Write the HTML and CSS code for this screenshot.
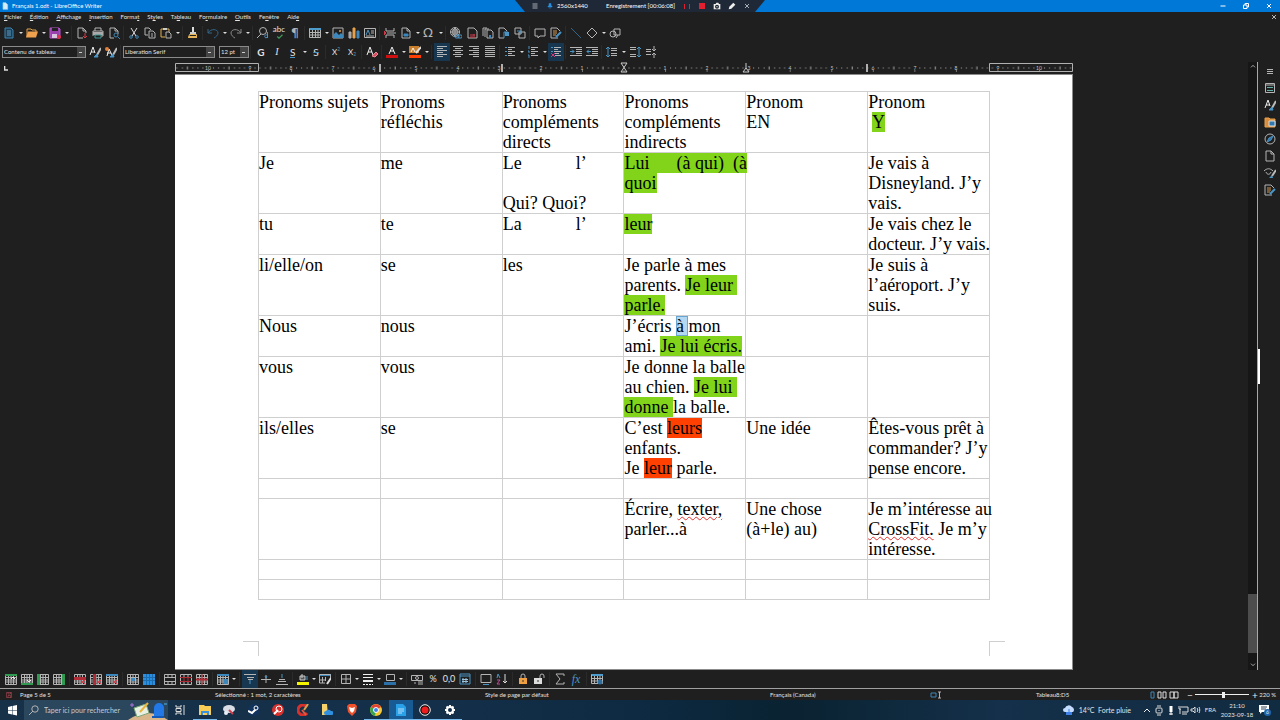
FILE: index.html
```html
<!DOCTYPE html>
<html lang="fr">
<head>
    <meta charset="UTF-8">
    <meta name="viewport" content="width=device-width, initial-scale=1.0">
    <title>Français 1.odt - LibreOffice Writer</title>
    <link rel="stylesheet" href="styles.css">
</head>
<body>
    <svg class="sprite" aria-hidden="true">
        <!-- file and edit -->
        <symbol id="new" viewBox="0 0 12 12"><path d="M2 1h6l2 2v8H2z" fill="#1d3d54" stroke="#3f86b3"/><path d="M4 4h4M4 6h4M4 8h4" stroke="#5f9cc0"/></symbol>
        <symbol id="open" viewBox="0 0 12 12"><path d="M1 10V2h4l1 1h4v2" stroke="#e8a14a"/><path d="M0 10.500l2-6h10l-2 6z" fill="#f0a24e" stroke="none"/></symbol>
        <symbol id="save" viewBox="0 0 12 12"><path d="M1 1h9l1 1v9H1z" fill="#9a3fae" stroke="#b658c8"/><path d="M3 1h6v3H3z" fill="#222" stroke="none"/><path d="M3 7h5v4H3z" fill="#d9c4de" stroke="none"/><circle cx="10" cy="10" r="2" fill="#e0304a" stroke="none"/></symbol>
        <symbol id="pdf" viewBox="0 0 12 12"><path d="M7 11H2V1h5l3 3v2M7 1v3h3"/><path d="M9 6v5M7 9l2 2 2-2" stroke="#d23b48"/></symbol>
        <symbol id="print" viewBox="0 0 12 12"><path d="M3 4V1h6v3M1 9V4h10v5H9"/><path d="M1 5h10v3H1z" fill="#aaa" stroke="none"/><path d="M3 8h6v3H3z" fill="#1f1f1f" stroke="#3f9a96"/></symbol>
        <symbol id="preview" viewBox="0 0 12 12"><path d="M6 11H2V1h5l3 3v3M7 1v3h3"/><circle cx="8" cy="8" r="2" stroke="#3f86b3"/><path d="M10 10l2 2" stroke="#3f86b3"/></symbol>
        <symbol id="cut" viewBox="0 0 12 12"><path d="M3 1l5 8M9 1L4 9" stroke="#ddd"/><circle cx="3" cy="10" r="1.300" stroke="#3f86b3"/><circle cx="9" cy="10" r="1.300" stroke="#3f86b3"/></symbol>
        <symbol id="copy" viewBox="0 0 12 12"><path d="M4 8H1V1h4l2 2M5 4h4l2 2v5H5z"/><path d="M7 7h2M7 9h2"/></symbol>
        <symbol id="paste" viewBox="0 0 12 12"><path d="M5 10H1V2h8v3" stroke="#e0b050"/><path d="M3 1h4v2H3z" fill="#ccc" stroke="none"/><path d="M6 5h3l2 2v4H6z"/></symbol>
        <symbol id="brush" viewBox="0 0 12 12"><path d="M6 0v5" stroke="#ddd" stroke-width="2"/><path d="M3 5h6v2H3z" fill="#ccc" stroke="none"/><path d="M2.500 7.500h7v3h-8z" stroke="#e8b45a"/><path d="M2 9h8v2H1z" fill="#e8b45a" stroke="none"/></symbol>
        <symbol id="undo" viewBox="0 0 12 12"><path d="M1 2v4h4M1 6c3-5 10-4 10 0 0 2-2 4-4 5" stroke="#33668a"/></symbol>
        <symbol id="redo" viewBox="0 0 12 12"><path d="M11 2v4H7M11 6C8 1 1 2 1 6c0 2 2 4 4 5" stroke="#8a8a8a"/></symbol>
        <symbol id="find" viewBox="0 0 12 12"><circle cx="6" cy="4" r="3.500"/><path d="M4 7l-4 4"/><path d="M10.500 5v6M10 8c-3-1-3 4 0 2.500" stroke="#4a94c4"/></symbol>
        <symbol id="check" viewBox="0 0 12 12"><path d="M3 6l3 3 6-6" stroke="#3f9a5a" stroke-width="2"/></symbol>
        <symbol id="table" viewBox="0 0 12 12"><path d="M.5 1.500h11v9H.5zM3.500 2v9M6.500 2v9M9 2v9M1 5.500h11M1 8h11"/><path d="M1 1h11v2H1z" fill="#4d9ccc" stroke="none"/></symbol>
        <symbol id="image" viewBox="0 0 12 12"><path d="M1 1h10v10H1z"/><path d="M1 11V8l3-3 3 3 2-2 2 2v3z" fill="#3c87bb" stroke="none"/><circle cx="8" cy="4" r="1" fill="#e8a14a" stroke="none"/></symbol>
        <symbol id="chart" viewBox="0 0 12 12"><path d="M1 5h2v6H1z" fill="#999"/><path d="M5 1h2v10H5z" fill="#e8a14a" stroke="#e8a14a"/><path d="M9 4h2v7H9z" fill="#3c87bb" stroke="#3c87bb"/></symbol>
        <symbol id="textbox" viewBox="0 0 12 12"><path d="M.5 1.500h11v9H.5z"/><path d="M2 8l2-5 2 5" stroke="#4a94c4"/><path d="M7 4h3M7 6h3M2 9h8"/></symbol>
        <symbol id="break" viewBox="0 0 12 12"><path d="M2 1v3h8V1M2 11V8h8v3M3 6h9"/><path d="M0 4v4l2-2z" fill="#d23b48" stroke="#d23b48"/></symbol>
        <symbol id="field" viewBox="0 0 12 12"><path d="M2 1h5l3 3v7H2zM7 1v3h3"/><path d="M4 7h4v2H4z" fill="#3c87bb" stroke="#3c87bb"/></symbol>
        <symbol id="link" viewBox="0 0 12 12"><circle cx="5" cy="5" r="4.500"/><path d="M1 5h9M5 1v8M2 3h6M2 7h6M5 1c-3 2-3 6 0 8M5 1c3 2 3 6 0 8"/><rect x="5" y="8" width="4" height="3" rx="1" stroke="#4a94c4"/><rect x="8" y="8" width="4" height="3" rx="1" stroke="#4a94c4"/></symbol>
        <symbol id="foot" viewBox="0 0 12 12"><path d="M2 1h6l3 3v7H2z"/><path d="M4 8h5M4 10h5M8 7v2" stroke="#d23b48"/></symbol>
        <symbol id="end" viewBox="0 0 12 12"><path d="M1 9V1h4M3 10V2h4M5 3h4l2 2v6H5z"/><path d="M8 8v3" stroke="#3c87bb" stroke-width="2"/></symbol>
        <symbol id="bookmark" viewBox="0 0 12 12"><path d="M6 11H1V1h5l3 3"/><path d="M6 11V5h4" stroke="#4a94c4"/><path d="M7 5h4v4H7z" fill="#4a94c4" stroke="none"/></symbol>
        <symbol id="cross" viewBox="0 0 12 12"><path d="M1 1h6v6H1zM5 5h6v6H5z"/><path d="M3 4h4v3" stroke="#4a94c4"/></symbol>
        <symbol id="comment" viewBox="0 0 12 12"><path d="M1 2h10v7H6l-2 2V9H1z"/></symbol>
        <symbol id="track" viewBox="0 0 12 12"><path d="M8 11H1V1h6l3 3"/><path d="M3 4h4M3 6h4M3 8h3" stroke="#d59a50"/><path d="M6 10l5-5" stroke="#4a94c4" stroke-width="2"/></symbol>
        <symbol id="line" viewBox="0 0 12 12"><path d="M1 1l10 10" stroke="#33668a"/></symbol>
        <symbol id="diamond" viewBox="0 0 12 12"><path d="M6 1l5 5-5 5-5-5z"/></symbol>
        <symbol id="shapes" viewBox="0 0 12 12"><circle cx="4" cy="7" r="3"/><path d="M5 2h6v6H5zM9 8l-2 3"/></symbol>

        <!-- formatting -->
        <symbol id="style" viewBox="0 0 12 12"><path d="M1 9l3-8 2 6M2 6h4" stroke="#eee"/><path d="M12 2L8 9" stroke="#bbb" stroke-width="2"/><path d="M8 8l-3 3h4z" fill="#4a94c4" stroke="#4a94c4"/></symbol>
        <symbol id="newstyle" viewBox="0 0 12 12"><path d="M2 10l2-7 3 6M2 7h4" stroke="#eee"/><path d="M12 2L8 9" stroke="#bbb" stroke-width="2"/><path d="M8 8l-3 3h4z" fill="#4a94c4" stroke="#4a94c4"/><circle cx="2" cy="3" r="2" fill="#e0803a" stroke="none"/></symbol>
        <symbol id="clear" viewBox="0 0 12 12"><path d="M1 9l3-8 3 8M2 6h4" stroke="#eee"/><path d="M6 10l4-4 2 2-3 3z" fill="#d85060" stroke="#e88a94"/></symbol>
        <symbol id="fontcolor" viewBox="0 0 12 12"><path d="M3 8l3-7 3 7M4 5h4" stroke="#eee"/><path d="M0 9h12v3H0z" fill="#d01010" stroke="none"/></symbol>
        <symbol id="marker" viewBox="0 0 12 12"><path d="M0 0h10v7H0z" fill="#c9802f" stroke="none"/><path d="M2 6l2-4 2 4" stroke="#f5f0e6"/><path d="M12 1L7 7" stroke="#ddd" stroke-width="2"/><path d="M0 9h12v3H0z" fill="#ff4000" stroke="none"/></symbol>
        <symbol id="left" viewBox="0 0 12 12"><path d="M1 .5h10M1 2.500h6M1 4.500h10M1 6.500h6M1 8.500h10M1 10.500h6"/></symbol>
        <symbol id="center" viewBox="0 0 12 12"><path d="M1 .5h10M3 2.500h6M1 4.500h10M3 6.500h6M1 8.500h10M3 10.500h6"/></symbol>
        <symbol id="right" viewBox="0 0 12 12"><path d="M1 .5h10M5 2.500h6M1 4.500h10M5 6.500h6M1 8.500h10M5 10.500h6"/></symbol>
        <symbol id="justify" viewBox="0 0 12 12"><path d="M1 .5h10M1 2.500h10M1 4.500h10M1 6.500h10M1 8.500h10M1 10.500h10"/></symbol>
        <symbol id="bullets" viewBox="0 0 12 12"><path d="M1 1.500h2M1 5.500h2M1 9.500h2" stroke="#4a94c4"/><path d="M4 1.500h7M4 3.500h4M4 5.500h7M4 7.500h4M4 9.500h7"/></symbol>
        <symbol id="numbers" viewBox="0 0 12 12"><path d="M2 0v3M1 5h1v2M1 9h1v3" stroke="#4a94c4"/><path d="M4 1.500h7M4 3.500h4M4 5.500h7M4 7.500h4M4 9.500h7"/></symbol>
        <symbol id="nolist" viewBox="0 0 12 12"><path d="M1 1.500h2M1 5.500h2" stroke="#4a94c4"/><path d="M4 1.500h7M4 3.500h4M4 5.500h7M5 7.500h4M5 9.500h6"/><path d="M1 7l4 4M5 7l-4 4" stroke="#d0387a"/></symbol>
        <symbol id="indent" viewBox="0 0 12 12"><path d="M0 1.500h12M6 3.500h6M6 5.500h6M6 7.500h6M0 9.500h12"/><path d="M0 5.500h4M2 3.500l2 2-2 2" stroke="#4a94c4"/></symbol>
        <symbol id="outdent" viewBox="0 0 12 12"><path d="M0 1.500h12M6 3.500h6M6 5.500h6M6 7.500h6M0 9.500h12"/><path d="M1 5.500h4M3 3.500l-2 2 2 2" stroke="#4a94c4"/></symbol>
        <symbol id="spacing" viewBox="0 0 12 12"><path d="M2 1v10M0 3l2-2 2 2M0 9l2 2 2-2" stroke="#4a94c4"/><path d="M5 2.500h6M5 4.500h6M5 7.500h6M5 9.500h6"/></symbol>
        <symbol id="parmore" viewBox="0 0 12 12"><path d="M1 1.500h6M1 3.500h6M1 8.500h6M1 10.500h6"/><path d="M10 1v10M8 3l2-2 2 2M8 9l2 2 2-2" stroke="#4a94c4"/></symbol>
        <symbol id="parless" viewBox="0 0 12 12"><path d="M1 3.500h5M1 5.500h5M1 8.500h5"/><path d="M9 0v5M7 3l2 2 2-2M9 12V7M7 9l2-2 2 2"/></symbol>

        <!-- table tools -->
        <symbol id="grid" viewBox="0 0 12 12"><path d="M.5 1.500h11v10H.5zM3.500 2v9M6 2v9M8.500 2v9M1 4.500h10M1 7h10M1 9h10"/></symbol>
        <symbol id="rowabove" viewBox="0 0 12 12"><use href="#grid"/><path d="M0 1h12v2H0z" fill="#2f9a50" stroke="none"/><path d="M6 6l2-2 2 2" stroke="#eee"/></symbol>
        <symbol id="rowbelow" viewBox="0 0 12 12"><use href="#grid"/><path d="M0 10h12v2H0z" fill="#2f9a50" stroke="none"/><path d="M6 7l2 2 2-2" stroke="#eee"/></symbol>
        <symbol id="colbefore" viewBox="0 0 12 12"><use href="#grid"/><path d="M0 1h3v11H0z" fill="#2f9a50" stroke="none"/></symbol>
        <symbol id="colafter" viewBox="0 0 12 12"><use href="#grid"/><path d="M9 1h3v11H9z" fill="#2f9a50" stroke="none"/></symbol>
        <symbol id="delrow" viewBox="0 0 12 12"><use href="#grid"/><path d="M0 4h12v3H0z" fill="#b02c36" stroke="none"/><path d="M7 7l4 4M11 7l-4 4" stroke="#e04050"/></symbol>
        <symbol id="delcol" viewBox="0 0 12 12"><use href="#grid"/><path d="M3 1h3v11H3z" fill="#b02c36" stroke="none"/><path d="M7 7l4 4M11 7l-4 4" stroke="#e04050"/></symbol>
        <symbol id="deltable" viewBox="0 0 12 12"><use href="#grid"/><path d="M0 1h12v2H0z" fill="#3c87bb" stroke="none"/><path d="M7 7l4 4M11 7l-4 4" stroke="#e04050"/></symbol>
        <symbol id="selcell" viewBox="0 0 12 12"><use href="#grid"/><path d="M4 5h4v3H4z" fill="#3c87bb" stroke="none"/></symbol>
        <symbol id="seltable" viewBox="0 0 12 12"><path d="M0 1h12v11H0z" fill="#2a8fe0" stroke="none"/><path d="M3.500 1v11M6.500 1v11M9.500 1v11M0 4.500h12M0 7.500h12" stroke="#1c6cb0"/></symbol>
        <symbol id="merge" viewBox="0 0 12 12"><path d="M.5 1.500h11v10H.5zM0 4.500h12M0 8.500h12M4 1v3M8 1v3M4 9v3M8 9v3"/></symbol>
        <symbol id="split" viewBox="0 0 12 12"><use href="#merge"/><path d="M0 4.500h12M0 8.500h12M4 4v5M8 4v5" stroke="#b02c36"/></symbol>
        <symbol id="splittable" viewBox="0 0 12 12"><use href="#grid"/><path d="M0 6.500h12" stroke="#b02c36" stroke-width="2"/><path d="M6 1v11" stroke="#b02c36"/></symbol>
        <symbol id="autosize" viewBox="0 0 12 12"><use href="#grid"/><path d="M0 1h12v2H0z" fill="#3c87bb" stroke="none"/><path d="M7 6h4v5H7z" fill="#3c87bb" stroke="none"/></symbol>
        <symbol id="vtop" viewBox="0 0 12 12"><path d="M0 1.500h12M3 4.500h7M4 6.500h5"/><path d="M6 7v4" stroke="#4a94c4"/></symbol>
        <symbol id="vmid" viewBox="0 0 12 12"><path d="M1 6.500h10M6 2v8"/><path d="M5 3l1 2 1-2" stroke="#4a94c4"/></symbol>
        <symbol id="vbot" viewBox="0 0 12 12"><path d="M0 11.500h12M2 8.500h8M3 6.500h6"/><path d="M6 1v4" stroke="#4a94c4"/></symbol>
        <symbol id="bucket" viewBox="0 0 12 12"><path d="M3 3h5v4H3zM5 1v4" fill="#555" stroke="#ccc"/><path d="M10 3v4" stroke="#4a94c4"/><path d="M0 9h12v3H0z" fill="#f5f500" stroke="none"/></symbol>
        <symbol id="tstyle" viewBox="0 0 12 12"><path d="M0 1h12v2H0z" fill="#3c87bb" stroke="none"/><path d="M.5 1.500h11v5M.5 2v8H6M3.500 4v6M6.500 4v4M1 7h6"/><path d="M12 5l-4 6" stroke="#ddd" stroke-width="2"/></symbol>
        <symbol id="borders" viewBox="0 0 12 12"><path d="M1.500 1.500h9v9h-9zM6 1v10M1 6h10"/></symbol>
        <symbol id="bstyle" viewBox="0 0 12 12"><path d="M1 1.500h10M1 4.500h10" stroke="#eee"/><path d="M1 8h10" stroke="#eee" stroke-width="2"/><path d="M1 11.500h10" stroke="#eee" stroke-dasharray="2 1"/></symbol>
        <symbol id="bcolor" viewBox="0 0 12 12"><path d="M2.500 1.500h8v6h-8z"/><path d="M0 9h12v3H0z" fill="#2b70a8" stroke="none"/></symbol>
        <symbol id="money" viewBox="0 0 12 12"><path d="M.5 2.500h11v5H.5z"/><circle cx="6" cy="5" r="1.500"/><path d="M7 9h5M7 11h5M3 10h2"/></symbol>
        <symbol id="date" viewBox="0 0 12 12"><path d="M1 1h10v10H1zM1 3h10" stroke="#4a94c4"/><path d="M4 5v5M7 5v5M3 6.500h6M3 8.500h6" stroke="#9ac4e0"/></symbol>
        <symbol id="caption" viewBox="0 0 12 12"><path d="M1 1.500h10v8H1z"/><path d="M3 11.500h6" stroke="#4a94c4"/></symbol>
        <symbol id="sort" viewBox="0 0 12 12"><path d="M1 5l1-4 2 4" stroke="#4a94c4"/><path d="M1 7h3l-3 4h3" stroke="#c04a9a"/><path d="M9 1v9M7 8l2 2 2-2" stroke="#ddd"/></symbol>
        <symbol id="lock" viewBox="0 0 12 12"><path d="M4 6V3a2 2 0 0 1 4 0v3"/><path d="M2 5h8v6H2z" fill="#f0a040" stroke="none"/><path d="M6 7v2" stroke="#333"/></symbol>
        <symbol id="unlock" viewBox="0 0 12 12"><path d="M7 6V3a2 2 0 0 1 4 0v2"/><path d="M1 5h8v6H1z" fill="#ddd" stroke="none"/><path d="M5 7v2" stroke="#333"/></symbol>
        <symbol id="sum" viewBox="0 0 12 12"><path d="M10 3V1H2l4 5-4 5h8V9"/></symbol>
        <symbol id="props" viewBox="0 0 12 12"><use href="#table"/><circle cx="9" cy="9" r="2.500" fill="#2d6f9e" stroke="none"/></symbol>

        <!-- sidebar -->
        <symbol id="menu" viewBox="0 0 12 12"><path d="M3 4.500h6M3 6.500h6M3 8.500h6"/></symbol>
        <symbol id="panel" viewBox="0 0 12 12"><path d="M1.500 1.500h9v9h-9zM1 3h10"/><path d="M3 5.500h6M3 8.500h6" stroke="#5fb0a8"/></symbol>
        <symbol id="gallery" viewBox="0 0 12 12"><path d="M1 2h4l1 1h5v8H1z" fill="#d88c3c" stroke="#e8a14a"/><path d="M5 5h6v5H5z" fill="#2d78b0" stroke="#ddd"/></symbol>
        <symbol id="compass" viewBox="0 0 12 12"><circle cx="6" cy="6" r="5"/><path d="M9 3L7 7 3 9l2-4z" fill="#2d78b0" stroke="#4a94c4"/></symbol>
        <symbol id="page" viewBox="0 0 12 12"><path d="M2 1h5l3 3v7H2zM7 1v3h3"/></symbol>
        <symbol id="inspect" viewBox="0 0 12 12"><path d="M0 4c3-3 6-3 9 0M2 5c1 3 4 3 5 0"/><path d="M12 3l-4 6" stroke="#bbb" stroke-width="2"/><path d="M8 8l-3 3h4z" fill="#4a94c4" stroke="none"/></symbol>

        <!-- taskbar -->
        <symbol id="windows" viewBox="0 0 12 12"><path d="M2 3l4-1v4H2zM6.500 2L11 1v5H6.500zM2 6.500h4v4l-4-1zM6.500 6.500H11v5l-4.500-1z" fill="#fff" stroke="none"/></symbol>
        <symbol id="search" viewBox="0 0 12 12"><circle cx="7" cy="5" r="3.200"/><path d="M5 7l-4 4"/></symbol>
        <symbol id="taskview" viewBox="0 0 12 12"><path d="M2 1v2h5V1M2 11V9h5v2M2 4.500h5v3H2zM10 1v10" stroke="#ddd"/></symbol>
        <symbol id="explorer" viewBox="0 0 12 12"><path d="M0 1h5l1 1h6v9H0z" fill="#f7cd55" stroke="none"/><path d="M2 7h8v4H8V9H4v2H2z" fill="#3b92dc" stroke="none"/></symbol>
        <symbol id="snip" viewBox="0 0 12 12"><ellipse cx="6" cy="5" rx="6" ry="4" fill="#d9dee6" stroke="none"/><path d="M6 6l4 4" stroke="#d04050" stroke-width="2"/><circle cx="3" cy="9" r="2" fill="#e8eef5" stroke="none"/></symbol>
        <symbol id="steam" viewBox="0 0 12 12"><circle cx="6" cy="6" r="6" fill="#12325e" stroke="none"/><path d="M0 7l4 2 4-4" stroke="#fff" stroke-width="2"/><circle cx="8" cy="4" r="2" fill="#12325e" stroke="#fff"/></symbol>
        <symbol id="antivirus" viewBox="0 0 12 12"><circle cx="6" cy="6" r="6" fill="#d8302c" stroke="none"/><circle cx="7" cy="5" r="3" stroke="#fff"/><path d="M2 10l4-4" stroke="#fff" stroke-width="2"/></symbol>
        <symbol id="ccleaner" viewBox="0 0 12 12"><path d="M10 3a5 5 0 1 0 0 6" stroke="#d8302c" stroke-width="3"/><path d="M11 0L7 6" stroke="#d8a050" stroke-width="2"/><path d="M5 6l4 5" stroke="#e05a40" stroke-width="2"/></symbol>
        <symbol id="cloud" viewBox="0 0 12 12"><path d="M1 0h5l1 11H1z" fill="#f3d06a" stroke="none"/><path d="M5 11a2 2 0 0 1 0-4 3 3 0 0 1 5 0 2 2 0 0 1 1 4z" fill="#2f8fe0" stroke="none"/></symbol>
        <symbol id="brave" viewBox="0 0 12 12"><path d="M3 0h6l2 2-1 6-4 4-4-4-1-6z" fill="#f0512a" stroke="none"/><path d="M3 3l3 1 3-1-1 4-2 2-2-2z" fill="#fff" stroke="none"/></symbol>
        <symbol id="chrome" viewBox="0 0 12 12"><circle cx="6" cy="6" r="6" fill="#f7c830" stroke="none"/><path d="M6 6L1 3a6 6 0 0 1 10 0z" fill="#e24334" stroke="none"/><path d="M6 6L1 3a6 6 0 0 0 4 9z" fill="#38a352" stroke="none"/><circle cx="6" cy="6" r="2.500" fill="#3f82ee" stroke="#fff"/></symbol>
        <symbol id="writer" viewBox="0 0 12 12"><path d="M1 0h7l3 3v9H1z" fill="#2aa0e8" stroke="none"/><path d="M3 5h6M3 7h6M3 9h4" stroke="#b5e0fa"/></symbol>
        <symbol id="rec" viewBox="0 0 12 12"><circle cx="6" cy="6" r="5.300" fill="#111" stroke="#eee"/><circle cx="6" cy="6" r="3.500" fill="#ee1c1c" stroke="none"/></symbol>
        <symbol id="gear" viewBox="0 0 12 12"><circle cx="6" cy="6" r="3" stroke="#fff" stroke-width="2"/><path d="M6 1v2M6 9v2M1 6h2M9 6h2M2.500 2.500l1 1M8.500 8.500l1 1M9.500 2.500l-1 1M2.500 9.500l1-1" stroke="#fff" stroke-width="2"/></symbol>
        <symbol id="rain" viewBox="0 0 12 12"><path d="M2 8a2 2 0 0 1 0-4 4 4 0 0 1 7-1 3 3 0 0 1 1 5z" fill="#c4dcff" stroke="none"/><path d="M3 8h6v3H3z" fill="#3c80e8" stroke="none"/><path d="M6 5v5" stroke="#3c80e8"/></symbol>
        <symbol id="chevup" viewBox="0 0 12 12"><path d="M3 8l3-3 3 3" stroke="#eee"/></symbol>
        <symbol id="meet" viewBox="0 0 12 12"><rect x="3" y="4" width="6" height="5" rx="1" stroke="#ddd"/><path d="M4 2h4M4 11h4M6 6v1" stroke="#ddd"/></symbol>
        <symbol id="mic" viewBox="0 0 12 12"><path d="M6 2v6" stroke="#fff" stroke-width="3"/><path d="M6 8v3M4 10h4" stroke="#fff"/></symbol>
        <symbol id="net" viewBox="0 0 12 12"><path d="M3 3h8v5H5M2 2v3h2M3 5v5M5 10h5" stroke="#ddd"/></symbol>
        <symbol id="sound" viewBox="0 0 12 12"><path d="M2 5h2l2-2v6L4 7H2zM8 4c1 1 1 3 0 4M10 3c1 2 1 4 0 6" stroke="#ddd"/></symbol>
        <symbol id="notif" viewBox="0 0 12 12"><path d="M1 1h10v7H4l-2 2V8H1z" fill="#fff" stroke="none"/><path d="M3 3h6M3 5h5" stroke="#345"/></symbol>
        <symbol id="docicon" viewBox="0 0 12 12"><path d="M3 1h4l3 3v7H3z" fill="#d7ecfb" stroke="#9fd0f2"/></symbol>
        <symbol id="pin" viewBox="0 0 12 12"><path d="M4 1h4v5h2v2H2V6h2zM6 8v4" fill="#2b8de0" stroke="#2b8de0"/></symbol>
        <symbol id="camera" viewBox="0 0 12 12"><path d="M1 3h3l1-2h3l1 2h2v8H1z" fill="#eee" stroke="none"/><circle cx="6" cy="7" r="2" stroke="#222a36" stroke-width="2"/></symbol>
        <symbol id="pencil" viewBox="0 0 12 12"><path d="M1 11l1-4 6-6 3 3-6 6z" fill="#eee" stroke="none"/></symbol>
        <symbol id="x" viewBox="0 0 12 12"><path d="M2 2l8 8M10 2l-8 8" stroke-width="2"/></symbol>
        <symbol id="min" viewBox="0 0 12 12"><path d="M1 6h10" stroke-width="2"/></symbol>
        <symbol id="restore" viewBox="0 0 12 12"><path d="M1 4h7v7H1zM4 4V1h7v7H8" stroke-width="2"/></symbol>
        <symbol id="lines" viewBox="0 0 12 12"><path d="M1 2h10M1 6h10M1 10h10" stroke-width="2"/></symbol>
    </svg>

    <header class="titlebar">
        <svg class="mini"><use href="#docicon"/></svg>
        <h1>Français 1.odt - LibreOffice Writer</h1>
        <div class="window-controls">
            <button title="Réduire"><svg><use href="#min"/></svg></button>
            <button title="Restaurer"><svg><use href="#restore"/></svg></button>
            <button title="Fermer"><svg><use href="#x"/></svg></button>
        </div>
        <div class="recorder">
            <button title="Menu"><svg class="dim"><use href="#lines"/></svg></button>
            <button title="Épingler"><svg><use href="#pin"/></svg></button>
            <span class="rec-size">2560x1440</span>
            <span class="rec-time">Enregistrement [00:06:08]</span>
            <button class="pause" title="Pause"></button>
            <button class="stop" title="Arrêter"></button>
            <button title="Capture"><svg class="big"><use href="#camera"/></svg></button>
            <button title="Dessiner"><svg class="big"><use href="#pencil"/></svg></button>
            <button title="Fermer"><svg class="dim"><use href="#x"/></svg></button>
        </div>
    </header>

    <nav class="menubar">
        <a href="#"><u>F</u>ichier</a>
        <a href="#"><u>É</u>dition</a>
        <a href="#"><u>A</u>ffichage</a>
        <a href="#"><u>I</u>nsertion</a>
        <a href="#">Forma<u>t</u></a>
        <a href="#">St<u>y</u>les</a>
        <a href="#">Ta<u>b</u>leau</a>
        <a href="#">Fo<u>r</u>mulaire</a>
        <a href="#"><u>O</u>utils</a>
        <a href="#">Fe<u>n</u>être</a>
        <a href="#">Aid<u>e</u></a>
        <button class="close-doc" title="Fermer le document"><svg><use href="#x"/></svg></button>
    </nav>

    <div class="toolbar">
        <button class="tool drop" title="Nouveau"><svg><use href="#new"/></svg></button>
        <button class="tool drop" title="Ouvrir"><svg><use href="#open"/></svg></button>
        <button class="tool drop" title="Enregistrer"><svg><use href="#save"/></svg></button>
        <i class="sep"></i>
        <button class="tool" title="Exporter en PDF"><svg><use href="#pdf"/></svg></button>
        <button class="tool" title="Imprimer"><svg><use href="#print"/></svg></button>
        <button class="tool" title="Aperçu"><svg><use href="#preview"/></svg></button>
        <i class="sep"></i>
        <button class="tool" title="Couper"><svg><use href="#cut"/></svg></button>
        <button class="tool" title="Copier"><svg><use href="#copy"/></svg></button>
        <button class="tool drop" title="Coller"><svg><use href="#paste"/></svg></button>
        <i class="sep"></i>
        <button class="tool" title="Cloner"><svg><use href="#brush"/></svg></button>
        <i class="sep"></i>
        <button class="tool drop" title="Annuler"><svg><use href="#undo"/></svg></button>
        <button class="tool drop" title="Rétablir"><svg><use href="#redo"/></svg></button>
        <i class="sep"></i>
        <button class="tool" title="Rechercher"><svg><use href="#find"/></svg></button>
        <button class="tool spell" title="Orthographe">abc<svg><use href="#check"/></svg></button>
        <button class="tool glyph" title="Marques">¶</button>
        <i class="sep"></i>
        <button class="tool drop" title="Tableau"><svg><use href="#table"/></svg></button>
        <button class="tool" title="Image"><svg><use href="#image"/></svg></button>
        <button class="tool" title="Diagramme"><svg><use href="#chart"/></svg></button>
        <button class="tool" title="Zone de texte"><svg><use href="#textbox"/></svg></button>
        <i class="sep"></i>
        <button class="tool" title="Saut de page"><svg><use href="#break"/></svg></button>
        <button class="tool drop" title="Champ"><svg><use href="#field"/></svg></button>
        <button class="tool drop glyph" title="Caractère spécial">Ω</button>
        <i class="sep"></i>
        <button class="tool" title="Hyperlien"><svg><use href="#link"/></svg></button>
        <button class="tool" title="Note de bas de page"><svg><use href="#foot"/></svg></button>
        <button class="tool" title="Note de fin"><svg><use href="#end"/></svg></button>
        <button class="tool" title="Repère de texte"><svg><use href="#bookmark"/></svg></button>
        <button class="tool" title="Renvoi"><svg><use href="#cross"/></svg></button>
        <i class="sep"></i>
        <button class="tool" title="Commentaire"><svg><use href="#comment"/></svg></button>
        <button class="tool" title="Suivi"><svg><use href="#track"/></svg></button>
        <i class="sep"></i>
        <button class="tool" title="Ligne"><svg><use href="#line"/></svg></button>
        <button class="tool drop" title="Formes"><svg><use href="#diamond"/></svg></button>
        <button class="tool" title="Fonctions de dessin"><svg><use href="#shapes"/></svg></button>
    </div>

    <div class="toolbar format">
        <select class="combo style-name" aria-label="Style de paragraphe"><option>Contenu de tableau</option></select>
        <button class="tool" title="Actualiser le style"><svg><use href="#style"/></svg></button>
        <button class="tool" title="Nouveau style"><svg><use href="#newstyle"/></svg></button>
        <i class="sep"></i>
        <select class="combo font-name" aria-label="Police"><option>Liberation Serif</option></select>
        <select class="combo font-size" aria-label="Taille"><option>12 pt</option></select>
        <i class="sep"></i>
        <button class="tool letter bold" title="Gras">G</button>
        <button class="tool letter italic" title="Italique">I</button>
        <button class="tool letter under drop" title="Souligner"><span>S</span></button>
        <button class="tool letter strike" title="Barrer"><span>S</span></button>
        <i class="sep"></i>
        <button class="tool script" title="Exposant">X<sup>2</sup></button>
        <button class="tool script" title="Indice">X<sub>2</sub></button>
        <i class="sep"></i>
        <button class="tool" title="Effacer le formatage"><svg><use href="#clear"/></svg></button>
        <i class="sep"></i>
        <button class="tool drop" title="Couleur de police"><svg><use href="#fontcolor"/></svg></button>
        <button class="tool drop" title="Surlignage"><svg><use href="#marker"/></svg></button>
        <i class="sep"></i>
        <button class="tool on" title="Gauche"><svg><use href="#left"/></svg></button>
        <button class="tool" title="Centrer"><svg><use href="#center"/></svg></button>
        <button class="tool" title="Droite"><svg><use href="#right"/></svg></button>
        <button class="tool" title="Justifier"><svg><use href="#justify"/></svg></button>
        <i class="sep"></i>
        <button class="tool drop" title="Puces"><svg><use href="#bullets"/></svg></button>
        <button class="tool drop" title="Numérotation"><svg><use href="#numbers"/></svg></button>
        <button class="tool on" title="Sans liste"><svg><use href="#nolist"/></svg></button>
        <i class="sep"></i>
        <button class="tool" title="Augmenter le retrait"><svg><use href="#indent"/></svg></button>
        <button class="tool" title="Diminuer le retrait"><svg><use href="#outdent"/></svg></button>
        <i class="sep"></i>
        <button class="tool drop" title="Interligne"><svg><use href="#spacing"/></svg></button>
        <button class="tool" title="Augmenter l’espacement"><svg><use href="#parmore"/></svg></button>
        <button class="tool" title="Diminuer l’espacement"><svg><use href="#parless"/></svg></button>
    </div>

    <main class="main">
        <div class="editor">
            <div class="ruler">
                <svg class="tab-type" viewBox="0 0 12 12"><path d="M4 3v6h5" stroke="#ddd" stroke-width="2"/></svg>
                <svg class="scale" viewBox="0 0 898 12">
                    <defs>
                        <pattern id="ticks" x="33" width="41.550" height="12" patternUnits="userSpaceOnUse">
                            <path d="M5 6h1M10 6h1M15.500 6h1M26 6h1M31 6h1M36 6h1" stroke="#aaa"/>
                            <path d="M21 4.500v3" stroke="#aaa"/>
                            <path d="M.5 8v2" stroke="#777"/>
                        </pattern>
                    </defs>
                    <rect width="898" height="12" fill="url(#ticks)" stroke="none"/>
                    <path d="M.5 1.500h83v8H.5zM814.500 1.500h83v8h-83z" stroke="#b0b0b0"/>
                    <path d="M205 2v8M327 2v8M692 2v8" stroke="#b0b0b0" stroke-width="2"/>
                    <path d="M446 1h6l-6 9h6zM568 10l3-4 3 4zM571 1v5" stroke="#ccc"/>
                    <g class="nums">
                        <text x="33" y="8">10</text><text x="75" y="8">9</text><text x="116" y="8">8</text><text x="158" y="8">7</text><text x="199" y="8">6</text>
                        <text x="241" y="8">5</text><text x="283" y="8">4</text><text x="324" y="8">3</text><text x="366" y="8">2</text><text x="407" y="8">1</text>
                        <text x="490" y="8">1</text><text x="532" y="8">2</text><text x="574" y="8">3</text><text x="615" y="8">4</text><text x="657" y="8">5</text>
                        <text x="698" y="8">6</text><text x="740" y="8">7</text><text x="781" y="8">8</text><text x="823" y="8">9</text><text x="864" y="8">10</text>
                    </g>
                </svg>
            </div>
            <article class="page">
                <table class="pronouns">
                    <tr>
                        <td>Pronoms sujets</td>
                        <td>Pronoms<br>réfléchis</td>
                        <td>Pronoms<br>compléments<br>directs</td>
                        <td>Pronoms<br>compléments<br>indirects</td>
                        <td>Pronom<br>EN</td>
                        <td>Pronom<br> <mark>Y</mark></td>
                    </tr>
                    <tr>
                        <td>Je</td>
                        <td>me</td>
                        <td>Le            l’<br><br>Qui? Quoi?</td>
                        <td><mark>Lui      (à qui)  (à<br>quoi</mark></td>
                        <td></td>
                        <td>Je vais à<br>Disneyland. J’y<br>vais.</td>
                    </tr>
                    <tr>
                        <td>tu</td>
                        <td>te</td>
                        <td>La            l’</td>
                        <td><mark>leur</mark></td>
                        <td></td>
                        <td>Je vais chez le<br>docteur. J’y vais.</td>
                    </tr>
                    <tr>
                        <td>li/elle/on</td>
                        <td>se</td>
                        <td>les</td>
                        <td>Je parle à mes<br>parents. <mark>Je leur <br>parle.</mark></td>
                        <td></td>
                        <td>Je suis à<br>l’aéroport. J’y<br>suis.</td>
                    </tr>
                    <tr>
                        <td>Nous</td>
                        <td>nous</td>
                        <td></td>
                        <td>J’écris <span class="selected">à </span>mon<br>ami. <mark>Je lui écris.</mark></td>
                        <td></td>
                        <td></td>
                    </tr>
                    <tr>
                        <td>vous</td>
                        <td>vous</td>
                        <td></td>
                        <td>Je donne la balle<br>au chien. <mark>Je lui <br>donne </mark>la balle.</td>
                        <td></td>
                        <td></td>
                    </tr>
                    <tr>
                        <td>ils/elles</td>
                        <td>se</td>
                        <td></td>
                        <td>C’est <mark class="red">leurs</mark><br>enfants.<br>Je <mark class="red">leur</mark> parle.</td>
                        <td>Une idée</td>
                        <td>Êtes-vous prêt à<br>commander? J’y<br>pense encore.</td>
                    </tr>
                    <tr><td></td><td></td><td></td><td></td><td></td><td></td></tr>
                    <tr>
                        <td></td>
                        <td></td>
                        <td></td>
                        <td>Écrire, <span class="typo">texter,</span><br>parler...à</td>
                        <td>Une chose<br>(à+le) au)</td>
                        <td>Je m’intéresse au<br><span class="typo">CrossFit.</span> Je m’y<br>intéresse.</td>
                    </tr>
                    <tr><td></td><td></td><td></td><td></td><td></td><td></td></tr>
                    <tr><td></td><td></td><td></td><td></td><td></td><td></td></tr>
                </table>
                <div class="margins"><i class="corner left"></i><i class="corner right"></i></div>
            </article>
        </div>
        <div class="scrollbar">
            <svg><use href="#chevup"/></svg>
            <div class="thumb"></div>
            <svg class="down"><use href="#chevup"/></svg>
        </div>
        <div class="splitter"><i></i></div>
        <aside class="sidebar">
            <button title="Paramètres"><svg><use href="#menu"/></svg></button>
            <button title="Propriétés"><svg><use href="#panel"/></svg></button>
            <button title="Styles"><svg><use href="#style"/></svg></button>
            <button title="Galerie"><svg><use href="#gallery"/></svg></button>
            <button title="Navigateur"><svg><use href="#compass"/></svg></button>
            <button title="Page"><svg><use href="#page"/></svg></button>
            <button title="Inspecteur"><svg><use href="#inspect"/></svg></button>
            <button title="Modifications"><svg><use href="#track"/></svg></button>
        </aside>
    </main>

    <div class="toolbar table-tools">
        <button class="tool" title="Ligne au-dessus"><svg><use href="#rowabove"/></svg></button>
        <button class="tool" title="Ligne en dessous"><svg><use href="#rowbelow"/></svg></button>
        <button class="tool" title="Colonne avant"><svg><use href="#colbefore"/></svg></button>
        <button class="tool" title="Colonne après"><svg><use href="#colafter"/></svg></button>
        <i class="sep"></i>
        <button class="tool" title="Supprimer la ligne"><svg><use href="#delrow"/></svg></button>
        <button class="tool" title="Supprimer la colonne"><svg><use href="#delcol"/></svg></button>
        <button class="tool" title="Supprimer le tableau"><svg><use href="#deltable"/></svg></button>
        <i class="sep"></i>
        <button class="tool" title="Sélectionner la cellule"><svg><use href="#selcell"/></svg></button>
        <button class="tool" title="Sélectionner le tableau"><svg><use href="#seltable"/></svg></button>
        <i class="sep"></i>
        <button class="tool" title="Fusionner"><svg><use href="#merge"/></svg></button>
        <button class="tool" title="Scinder"><svg><use href="#split"/></svg></button>
        <button class="tool" title="Scinder le tableau"><svg><use href="#splittable"/></svg></button>
        <i class="sep"></i>
        <button class="tool drop" title="Optimiser"><svg><use href="#autosize"/></svg></button>
        <i class="sep"></i>
        <button class="tool on" title="Aligner en haut"><svg><use href="#vtop"/></svg></button>
        <button class="tool" title="Centrer verticalement"><svg><use href="#vmid"/></svg></button>
        <button class="tool" title="Aligner en bas"><svg><use href="#vbot"/></svg></button>
        <i class="sep"></i>
        <button class="tool drop" title="Arrière-plan"><svg><use href="#bucket"/></svg></button>
        <button class="tool" title="Styles"><svg><use href="#tstyle"/></svg></button>
        <i class="sep"></i>
        <button class="tool drop" title="Bordures"><svg><use href="#borders"/></svg></button>
        <button class="tool drop" title="Style de bordure"><svg><use href="#bstyle"/></svg></button>
        <button class="tool drop" title="Couleur de bordure"><svg><use href="#bcolor"/></svg></button>
        <i class="sep"></i>
        <button class="tool" title="Monétaire"><svg><use href="#money"/></svg></button>
        <button class="tool num" title="Pourcentage">%</button>
        <button class="tool num" title="Décimal">0,0</button>
        <button class="tool" title="Date"><svg><use href="#date"/></svg></button>
        <i class="sep"></i>
        <button class="tool" title="Légende"><svg><use href="#caption"/></svg></button>
        <button class="tool" title="Trier"><svg><use href="#sort"/></svg></button>
        <i class="sep"></i>
        <button class="tool" title="Protéger"><svg><use href="#lock"/></svg></button>
        <button class="tool" title="Déprotéger"><svg><use href="#unlock"/></svg></button>
        <i class="sep"></i>
        <button class="tool" title="Somme"><svg><use href="#sum"/></svg></button>
        <button class="tool num fx" title="Formule">fx</button>
        <i class="sep"></i>
        <button class="tool" title="Propriétés du tableau"><svg><use href="#props"/></svg></button>
    </div>

    <footer class="statusbar">
        <span><svg class="unsaved" viewBox="0 0 12 12"><path d="M1 1h10v10H1zM4 1v3h5V1M4 11V7h5v4" stroke="#c8505c"/></svg></span>
        <span>Page 5 de 5</span>
        <span>Sélectionné : 1 mot, 2 caractères</span>
        <span>Style de page par défaut</span>
        <span>Français (Canada)</span>
        <span><svg class="insert" viewBox="0 0 12 8"><path d="M1 2h5v4H1z" stroke="#3c87bb"/><path d="M8 1h3M8 7h3M9.500 1v6"/></svg></span>
        <span>Tableau8:D5</span>
        <span class="views"><svg viewBox="0 0 30 8"><path d="M1 1h3v6H1z" stroke="#3c87bb"/><path d="M8 1h3v6H8zM13 1h3v6h-3zM20 1h4v6h-4zM24 1h4v6h-4z" stroke="#ddd"/></svg></span>
        <span class="zoom">
            <button title="Zoom arrière">−</button>
            <input type="range" min="20" max="400" value="220" aria-label="Zoom">
            <button title="Zoom avant">+</button>
            <span>220 %</span>
        </span>
    </footer>

    <div class="taskbar">
        <button class="start" title="Démarrer"><svg><use href="#windows"/></svg></button>
        <div class="searchbox">
            <svg><use href="#search"/></svg>
            <input type="text" placeholder="Taper ici pour rechercher" aria-label="Rechercher">
            <svg class="art" viewBox="0 0 40 20">
                <path d="M0 20q20-14 40 0z" fill="#d8b58a" stroke="none"/>
                <path d="M6 8l12-4 3 9-12 4z" fill="#e8f0e4" stroke="#7fa87a"/>
                <path d="M12 12l8-9" stroke="#e8b43c" stroke-width="2"/>
                <path d="M26 16V8a5 5 0 0 1 10 0v8z" fill="#2378e8" stroke="none"/>
                <path d="M24 16h12v2H24z" fill="#135ab8" stroke="none"/>
                <path d="M2 5h4M4 3v4" stroke="#b070e0"/><path d="M36 4h3" stroke="#50b8e8"/>
            </svg>
        </div>
        <div class="apps">
            <button title="Vue des tâches"><svg><use href="#taskview"/></svg></button>
            <button class="running" title="Explorateur"><svg><use href="#explorer"/></svg></button>
            <button title="Capture"><svg><use href="#snip"/></svg></button>
            <button title="Steam"><svg><use href="#steam"/></svg></button>
            <button title="Antivirus"><svg><use href="#antivirus"/></svg></button>
            <button title="CCleaner"><svg><use href="#ccleaner"/></svg></button>
            <button title="Fichiers"><svg><use href="#cloud"/></svg></button>
            <button title="Brave"><svg><use href="#brave"/></svg></button>
            <button class="running" title="Chrome"><svg><use href="#chrome"/></svg></button>
            <button class="running active" title="Writer"><svg><use href="#writer"/></svg></button>
            <button class="running" title="Enregistreur"><svg><use href="#rec"/></svg></button>
            <button class="running" title="Paramètres"><svg><use href="#gear"/></svg></button>
        </div>
        <div class="tray">
            <svg><use href="#rain"/></svg>
            <span class="weather">14°C&nbsp; Forte pluie</span>
            <svg><use href="#chevup"/></svg>
            <svg><use href="#meet"/></svg>
            <svg><use href="#mic"/></svg>
            <svg><use href="#net"/></svg>
            <svg><use href="#sound"/></svg>
            <span class="lang">FRA</span>
            <span class="clock">21:10<br>2023-09-18</span>
            <button class="notifications" title="Notifications"><svg><use href="#notif"/></svg><b>6</b></button>
        </div>
    </div>
</body>
</html>
```

FILE: styles.css
```css
* {
    box-sizing: border-box;
}
body {
    margin: 0;
    height: 100vh;
    display: flex;
    flex-direction: column;
    overflow: hidden;
    background: #1f1f1f;
    color: #e4e4e4;
    font: 6px/10px Lato, "Open Sans", sans-serif;
}
svg {
    display: block;
    flex: none;
    width: 12px;
    height: 12px;
    fill: none;
    stroke: #b4b4b4;
}
button {
    display: flex;
    align-items: center;
    justify-content: center;
    margin: 0;
    padding: 0;
    border: none;
    background: none;
    color: inherit;
    font: inherit;
}
.sprite {
    position: absolute;
    width: 0;
    height: 0;
}

/* title bar */
.titlebar {
    position: relative;
    flex: none;
    display: flex;
    align-items: center;
    height: 12px;
    background: #0078d7;
    color: #fff;
}
.titlebar svg {
    width: 6px;
    height: 6px;
    stroke: #fff;
}
.titlebar .mini {
    width: 8px;
    height: 8px;
    margin: 0 3px 0 1px;
}
.titlebar h1 {
    margin: 0;
    font-size: 6px;
    font-weight: 400;
}
.window-controls {
    display: flex;
    margin-left: auto;
}
.window-controls button {
    width: 23px;
}
.recorder {
    position: absolute;
    left: 50%;
    top: 0;
    display: flex;
    align-items: center;
    width: 250px;
    height: 12px;
    margin-left: -125px;
    padding-left: 12px;
    background: #1f2836;
    clip-path: polygon(0 0, 100% 0, 240px 100%, 10px 100%);
}
.recorder button {
    width: 15px;
}
.titlebar .big {
    width: 8px;
    height: 8px;
}
.titlebar .dim {
    stroke: #a8acb4;
}
.rec-size {
    width: 49px;
}
.rec-time {
    width: 73px;
}
.pause::before {
    content: "";
    width: 4px;
    height: 5px;
    border: solid #e02030;
    border-width: 0 1px;
}
.stop::before {
    content: "";
    width: 6px;
    height: 6px;
    background: #e02030;
}

/* menus */
.menubar {
    flex: none;
    display: flex;
    align-items: center;
    gap: 8px;
    height: 11px;
    padding: 0 3px 1px 4px;
}
.menubar a {
    color: inherit;
    text-decoration: none;
}
.close-doc {
    margin-left: auto;
}
.close-doc svg {
    width: 6px;
    height: 6px;
}

/* toolbars */
.toolbar {
    flex: none;
    display: flex;
    align-items: center;
    height: 20px;
    padding-left: 1px;
}
.tool {
    flex: none;
    width: 16px;
    height: 18px;
}
.drop {
    justify-content: flex-start;
    width: 23px;
    padding-left: 2px;
}
.drop::after {
    content: "";
    margin-left: auto;
    margin-right: 1px;
    border: 2px solid transparent;
    border-top-color: #ddd;
    border-bottom: none;
}
.on {
    background: #16374f;
}
.sep {
    flex: none;
    width: 1px;
    height: 14px;
    margin: 0 2px 0 1px;
    background: #2b2b2b;
}
.spell {
    flex-direction: column;
    line-height: 7px;
    font-size: 8px;
}
.spell svg {
    height: 7px;
}
.glyph {
    font: 13px/16px "DejaVu Sans", sans-serif;
    color: #b4b4b4;
}
.format {
    height: 19px;
    padding: 0 0 1px 2px;
}
.combo {
    appearance: none;
    height: 12px;
    padding: 0 1px;
    border: 1px solid #8a8a8a;
    border-radius: 0;
    background: linear-gradient(#ccc, #ccc) right 3px center / 3px 1px no-repeat, linear-gradient(#444, #444) right / 8px 12px no-repeat;
    color: inherit;
    font: inherit;
}
.style-name {
    width: 84px;
    margin-right: 1px;
}
.font-name {
    width: 92px;
    margin-right: 4px;
}
.font-size {
    width: 30px;
}
.letter {
    font-size: 10px;
}
.letter.drop {
    padding-left: 5px;
}
.bold {
    font-weight: 700;
}
.italic {
    font-family: "Liberation Serif", serif;
    font-style: italic;
}
.under span {
    border-bottom: 1px solid #4a94c4;
}
.strike span {
    text-decoration: line-through #4a94c4;
}
.script {
    font-size: 8px;
}
.script sup,
.script sub {
    color: #4a94c4;
    font-size: 5px;
    line-height: 5px;
}
.script sup {
    margin-bottom: 5px;
}
.script sub {
    margin-top: 5px;
}
.num {
    font-size: 9px;
}
.fx {
    color: #4a94c4;
    font: italic 12px/12px "Liberation Serif", serif;
}

/* document area */
.main {
    flex: 1;
    display: flex;
    min-height: 0;
}
.editor {
    flex: 1;
    display: flex;
    flex-direction: column;
    align-items: center;
}
.ruler {
    flex: none;
    display: flex;
    justify-content: center;
    width: 100%;
    height: 12px;
}
.tab-type {
    width: 8px;
    height: 8px;
    margin: 2px auto 0 2px;
}
.scale {
    width: 898px;
    margin-right: auto;
    margin-left: -10px;
}
.nums {
    fill: #c8c8c8;
    stroke: none;
    font-size: 5px;
    text-anchor: middle;
}
.page {
    flex: 1;
    display: flex;
    flex-direction: column;
    width: 898px;
    padding: 16px 82px 13px 83px;
    border: 1px solid #8c8c8c;
    border-left: none;
    background: #fff;
    color: #000;
}
.pronouns {
    width: 100%;
    table-layout: fixed;
    border-collapse: collapse;
    font: 18px/20px "Liberation Serif", serif;
}
.pronouns tr {
    height: 20px;
}
.pronouns td {
    padding: 0;
    border: 1px solid #cfcfcf;
    vertical-align: top;
    white-space: pre;
}
.pronouns mark {
    background: #81d41a;
    color: inherit;
}
.pronouns .red {
    background: #ff4000;
}
.selected {
    background: #b4d8f2;
    outline: 1px solid #6aa5d0;
    outline-offset: -1px;
}
.typo {
    text-decoration: underline wavy #e03030 1px;
}
.margins {
    display: flex;
    justify-content: space-between;
    margin: auto -15px 0;
}
.corner {
    width: 16px;
    height: 15px;
    border: 0 solid #cfcfcf;
    border-top-width: 1px;
}
.corner.left {
    border-right-width: 1px;
}
.corner.right {
    border-left-width: 1px;
}
.scrollbar {
    display: flex;
    flex-direction: column;
    align-items: center;
    width: 9px;
    padding-bottom: 1px;
    background: #161616;
}
.scrollbar svg {
    width: 8px;
    height: 8px;
}
.scrollbar .down {
    margin-top: 8px;
    transform: rotate(180deg);
}
.thumb {
    width: 100%;
    height: 59px;
    margin-top: auto;
    background: #4d4d4d;
}
.splitter {
    display: flex;
    align-items: center;
    width: 3px;
    border-left: 1px solid #a8a8a8;
}
.splitter i {
    width: 2px;
    height: 35px;
    background: #fff;
}
.sidebar {
    display: flex;
    flex-direction: column;
    align-items: center;
    width: 20px;
}
.sidebar button {
    height: 17px;
}

/* bottom bars */
.table-tools {
    height: 19px;
    padding-left: 3px;
    border-bottom: 1px solid #a0a0a0;
}
.table-tools .drop {
    width: 22px;
}
.table-tools .sep {
    margin: 0 2px;
}
.statusbar {
    flex: none;
    display: grid;
    grid-template-columns: 20px 195fr 270fr 285fr 160fr 106fr 114fr 37px 93px;
    align-items: center;
    height: 11px;
}
.unsaved {
    width: 6px;
    height: 6px;
    margin-left: 6px;
}
.insert {
    height: 8px;
}
.views svg {
    width: 30px;
    height: 8px;
}
.zoom {
    display: flex;
    align-items: center;
}
.zoom button {
    flex: none;
    width: 6px;
    font-size: 10px;
}
.zoom input {
    appearance: none;
    width: 54px;
    height: 1px;
    margin: 0 3px 0 2px;
    background: #eee;
}
.zoom input::-webkit-slider-thumb {
    appearance: none;
    width: 3px;
    height: 6px;
    background: #eee;
}
.zoom span {
    margin-left: auto;
    padding-right: 4px;
    white-space: nowrap;
}

/* taskbar */
.taskbar {
    flex: none;
    display: flex;
    height: 20px;
    background: linear-gradient(90deg, #173149, #142f49 35%, #0d2a42 50%, #0a2231 62%, #14304a 78%, #112b40);
    font-size: 7px;
}
.start {
    width: 24px;
}
.apps {
    display: flex;
    width: 294px;
}
.apps button {
    flex: 1;
    border-bottom: 1px solid transparent;
}
.apps .running {
    border-color: #76b9ed;
}
.apps .active {
    background: #175a94;
}
.searchbox {
    display: flex;
    align-items: center;
    width: 144px;
    padding-left: 4px;
    background: #2b475e;
}
.searchbox input {
    flex: 1;
    min-width: 0;
    margin-left: 4px;
    padding: 0;
    border: none;
    background: none;
    color: #dde4ea;
    font: inherit;
}
.searchbox input::placeholder {
    color: #c3ccd4;
}
.searchbox .art {
    width: 40px;
    height: 20px;
}
.tray {
    display: flex;
    align-items: center;
    margin-left: auto;
}
.weather {
    width: 62px;
    margin-left: 4px;
}
.lang {
    margin-left: 4px;
    font-size: 6px;
}
.clock {
    width: 42px;
    text-align: center;
    font-size: 6px;
    line-height: 9px;
}
.notifications {
    position: relative;
    width: 12px;
    margin-right: 10px;
}
.notifications b {
    position: absolute;
    left: 6px;
    top: 5px;
    width: 7px;
    height: 7px;
    border-radius: 50%;
    background: #1e66ae;
    font: 5px/7px Lato, sans-serif;
}
```
